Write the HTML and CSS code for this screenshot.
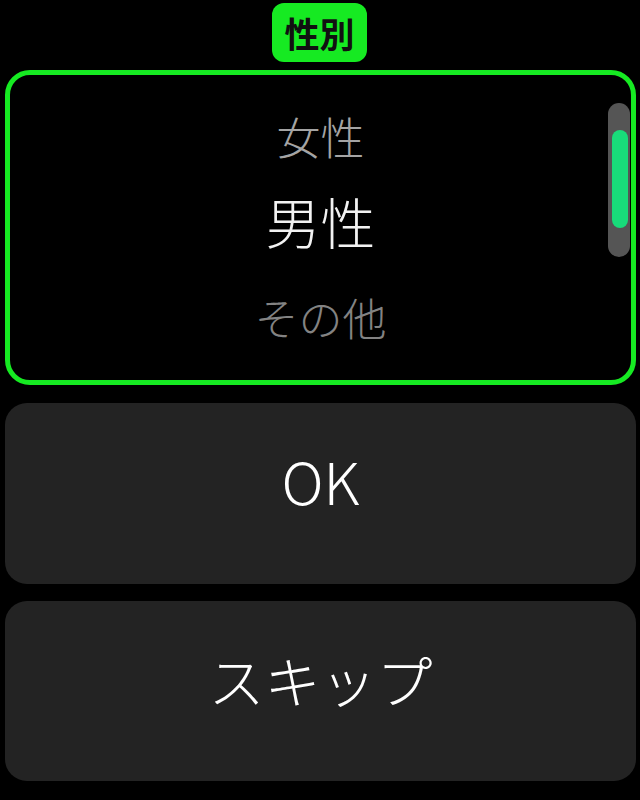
FILE: index.html
```html
<!DOCTYPE html>
<html lang="ja">
<head>
<meta charset="utf-8">
<title>性別</title>
<link rel="stylesheet" href="styles.css">
</head>
<body>
<div class="screen">
  <div class="header"><span class="badge">性別</span></div>
  <div class="picker">
    <div class="item item-prev">女性</div>
    <div class="item item-selected">男性</div>
    <div class="item item-next">その他</div>
    <div class="scroll-track"><div class="scroll-thumb"></div></div>
  </div>
  <button class="btn btn-ok">OK</button>
  <button class="btn btn-skip">スキップ</button>
</div>
</body>
</html>
```
FILE: styles.css
```css
html, body {
  margin: 0;
  padding: 0;
  background: #000;
}
body {
  width: 640px;
  height: 800px;
  overflow: hidden;
  font-family: "Noto Sans CJK JP", "Noto Sans", sans-serif;
}
.screen {
  display: flex;
  flex-direction: column;
  padding: 3px 4px 0 5px;
}
.header {
  display: flex;
  justify-content: center;
  height: 59px;
}
.badge {
  display: flex;
  align-items: center;
  justify-content: center;
  width: 95px;
  height: 59px;
  margin-left: -2px;
  background: #16ea22;
  border-radius: 12px;
  color: #111;
  font-weight: 700;
  font-size: 35px;
  line-height: 1;
}
.picker {
  position: relative;
  margin-top: 8px;
  height: 315px;
  box-sizing: border-box;
  border: 5px solid #16ea22;
  border-radius: 25px;
  display: flex;
  flex-direction: column;
  align-items: center;
  padding-top: 31px;
}
.item {
  text-align: center;
  font-weight: 300;
}
.item-prev {
  font-size: 44px;
  line-height: 60px;
  color: #a4a4a4;
}
.item-selected {
  font-size: 55px;
  line-height: 80px;
  color: #f2f2f2;
  margin-top: 14px;
}
.item-next {
  font-size: 44px;
  line-height: 60px;
  color: #838383;
  margin-top: 27px;
}
.scroll-track {
  position: absolute;
  top: 28px;
  right: 1px;
  width: 22px;
  height: 154px;
  border-radius: 11px;
  background: #555;
}
.scroll-thumb {
  margin: 27px 0 0 4px;
  width: 16px;
  height: 98px;
  border-radius: 8px;
  background: #18dc7a;
}
.btn {
  display: flex;
  align-items: center;
  justify-content: center;
  border: none;
  background: #232323;
  color: #fff;
  border-radius: 22px;
  font-family: "Noto Sans CJK JP", "Noto Sans", sans-serif;
  font-weight: 300;
  width: 100%;
}
.btn-ok {
  margin-top: 18px;
  height: 181px;
  font-size: 58px;
  padding: 0 0 27px;
}
.btn-skip {
  margin-top: 17px;
  height: 180px;
  font-size: 56px;
  padding: 0 0 26px;
}
```
